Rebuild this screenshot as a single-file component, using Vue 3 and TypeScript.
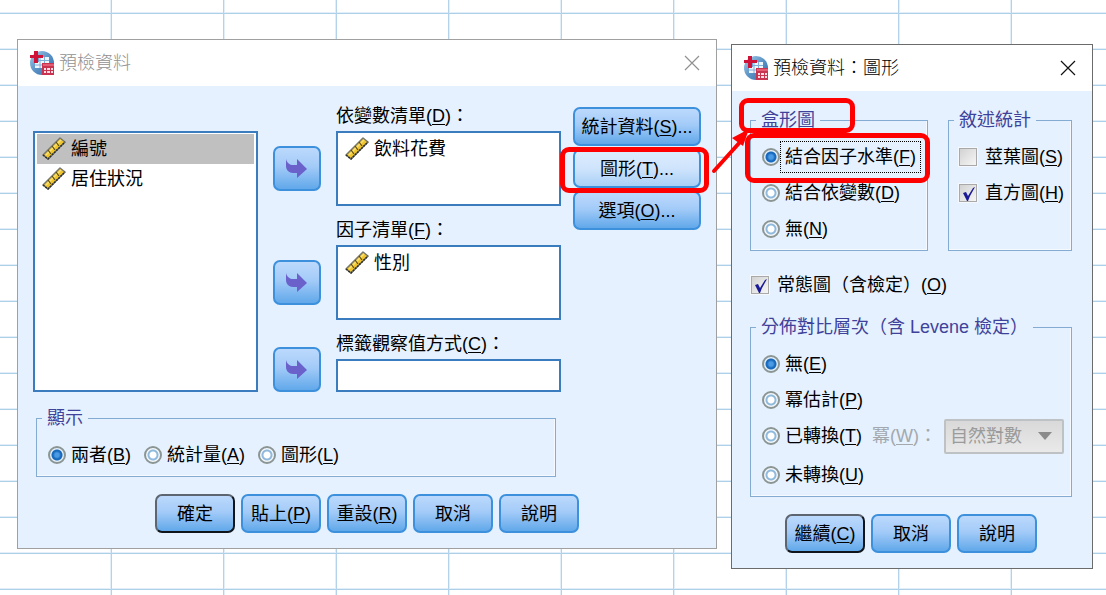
<script setup lang="ts">
import { ref } from 'vue'

interface Choice {
  value: string
  text: string
  key: string
}

const variables = ref<string[]>(['編號', '居住狀況'])
const selected = ref('編號')

const targets = [
  { id: 'dependent', text: '依變數清單', key: 'D', items: ['飲料花費'] },
  { id: 'factor', text: '因子清單', key: 'F', items: ['性別'] },
]

const display = ref('both')
const displayChoices: Choice[] = [
  { value: 'both', text: '兩者', key: 'B' },
  { value: 'stats', text: '統計量', key: 'A' },
  { value: 'plots', text: '圖形', key: 'L' },
]

const sideButtons = [
  { text: '統計資料', key: 'S', marked: false },
  { text: '圖形', key: 'T', marked: true },
  { text: '選項', key: 'O', marked: false },
]

const mainActions = [
  { text: '確定', key: '' },
  { text: '貼上', key: 'P' },
  { text: '重設', key: 'R' },
  { text: '取消', key: '' },
  { text: '說明', key: '' },
]
const plotActions = [
  { text: '繼續', key: 'C' },
  { text: '取消', key: '' },
  { text: '說明', key: '' },
]

const boxplot = ref('factor')
const boxplotChoices: Choice[] = [
  { value: 'factor', text: '結合因子水準', key: 'F' },
  { value: 'dependent', text: '結合依變數', key: 'D' },
  { value: 'none', text: '無', key: 'N' },
]

const descriptive = ref([
  { text: '莖葉圖', key: 'S', on: false },
  { text: '直方圖', key: 'H', on: true },
])
const normality = ref(true)

const spread = ref('none')
const spreadChoices: Choice[] = [
  { value: 'none', text: '無', key: 'E' },
  { value: 'power', text: '冪估計', key: 'P' },
  { value: 'transformed', text: '已轉換', key: 'T' },
  { value: 'untransformed', text: '未轉換', key: 'U' },
]
</script>

<template>
  <svg class="defs" width="0" height="0" aria-hidden="true">
    <defs>
      <linearGradient id="globe" x1="0" y1="0" x2="1" y2="1">
        <stop offset="0" stop-color="#a9cdea" />
        <stop offset="0.5" stop-color="#5b93c6" />
        <stop offset="1" stop-color="#2f6aa5" />
      </linearGradient>
      <symbol id="app-logo" viewBox="0 0 24 24">
        <circle cx="12" cy="12" r="12" fill="url(#globe)" />
        <path d="M9 6h10v11H5v-6h4z" fill="#eef5fb" />
        <path d="M5 14h14M9 9.500h10M10 6v11M14.500 6v11" stroke="#7fb0dc" stroke-width="1" />
        <path d="M4 0h4v4h5v3H8v5H4V7H0V4h4z" fill="#cf1237" />
        <rect x="12" y="12" width="12" height="12" fill="#c93350" />
        <rect x="13" y="13" width="11" height="2" fill="#e45c72" />
        <path d="M14 17h2v2h-2zM17 17h3v2h-3zM21 17h2v2h-2zM14 20h2v2h-2zM17 20h3v2h-3zM21 20h2v2h-2z" fill="#fbdfe4" />
      </symbol>
      <symbol id="ruler" viewBox="0 0 24 24">
        <path d="M1 18L18 1l5 4L6 22z" fill="#f0c52c" stroke="#77776a" stroke-width="1.500" stroke-linejoin="round" />
        <path d="M4 18L19 3" stroke="#f9e277" stroke-width="1.500" />
        <path d="M6 13l3 4M10 9l3 4M14 5l3 4" stroke="#5b4a12" stroke-width="1.200" />
        <path d="M1 18l5 4L23 5" fill="none" stroke="#2c2d30" stroke-width="1.500" stroke-dasharray="2 1" />
      </symbol>
      <symbol id="move-arrow" viewBox="0 0 22 20">
        <path d="M0 0C1 4 4 6 7 6h4V0l10 10-10 9v-5H7C3 14 0 11 0 7z" fill="#6a61cb" />
      </symbol>
      <symbol id="close" viewBox="0 0 16 16">
        <path d="M1 1l14 14M15 1L1 15" fill="none" stroke="currentColor" stroke-width="1.200" />
      </symbol>
      <symbol id="check" viewBox="0 0 20 20">
        <path d="M5 10l3-1 2 4L15 5l2-1-5 9-2 5H9z" fill="#1a1a96" />
      </symbol>
    </defs>
  </svg>

  <main class="desktop">
    <section class="window idle" aria-labelledby="main-title">
      <header class="titlebar">
        <svg class="logo" aria-hidden="true"><use href="#app-logo" /></svg>
        <h1 id="main-title">預檢資料</h1>
        <button class="close" type="button" aria-label="關閉"><svg><use href="#close" /></svg></button>
      </header>
      <div class="body main-body">
        <div class="columns">
          <div class="left">
            <div class="transfer">
              <ul class="list source" role="listbox" aria-label="變數">
                <li
                  v-for="name in variables"
                  :key="name"
                  role="option"
                  :aria-selected="selected === name"
                  :class="{ selected: selected === name }"
                  @click="selected = name"
                >
                  <svg class="ruler" aria-hidden="true"><use href="#ruler" /></svg>{{ name }}
                </li>
              </ul>
              <template v-for="t in targets" :key="t.id">
                <div :id="t.id" class="caption">{{ t.text }}(<u>{{ t.key }}</u>)：</div>
                <button class="push move" type="button" :aria-label="'移至' + t.text">
                  <svg><use href="#move-arrow" /></svg>
                </button>
                <ul class="list" role="listbox" :aria-labelledby="t.id">
                  <li v-for="item in t.items" :key="item" role="option">
                    <svg class="ruler" aria-hidden="true"><use href="#ruler" /></svg>{{ item }}
                  </li>
                </ul>
              </template>
              <label class="caption" for="case-label">標籤觀察值方式(<u>C</u>)：</label>
              <button class="push move last" type="button" aria-label="移至標籤觀察值方式">
                <svg><use href="#move-arrow" /></svg>
              </button>
              <input id="case-label" class="list single" type="text" />
            </div>
            <fieldset class="group display">
              <legend>顯示</legend>
              <div class="inline-row">
                <label v-for="c in displayChoices" :key="c.value" class="option">
                  <input v-model="display" type="radio" name="display" :value="c.value" />
                  <span class="text">{{ c.text }}(<u>{{ c.key }}</u>)</span>
                </label>
              </div>
            </fieldset>
          </div>
          <div class="side">
            <button v-for="b in sideButtons" :key="b.key" class="push" :class="{ hot: b.marked }" type="button">
              {{ b.text }}(<u>{{ b.key }}</u>)...
              <span v-if="b.marked" class="mark mark-button"></span>
            </button>
          </div>
        </div>
        <div class="actions">
          <button v-for="(a, i) in mainActions" :key="a.text" class="push" :class="{ primary: i === 0 }" type="button">
            {{ a.text }}<template v-if="a.key">(<u>{{ a.key }}</u>)</template>
          </button>
        </div>
      </div>
    </section>

    <section class="window front" aria-labelledby="plot-title">
      <header class="titlebar">
        <svg class="logo" aria-hidden="true"><use href="#app-logo" /></svg>
        <h1 id="plot-title">預檢資料：圖形</h1>
        <button class="close" type="button" aria-label="關閉"><svg><use href="#close" /></svg></button>
      </header>
      <div class="body plot-body">
        <div class="pair">
          <fieldset class="group">
            <legend>盒形圖<span class="mark mark-legend"></span></legend>
            <label v-for="(c, i) in boxplotChoices" :key="c.value" class="option">
              <input v-model="boxplot" type="radio" name="boxplot" :value="c.value" />
              <span class="text" :class="{ focused: i === 0 }">{{ c.text }}(<u>{{ c.key }}</u>)</span>
              <span v-if="i === 0" class="mark mark-option"></span>
            </label>
          </fieldset>
          <fieldset class="group checks">
            <legend>敘述統計</legend>
            <label v-for="d in descriptive" :key="d.key" class="option">
              <span class="tick">
                <input v-model="d.on" type="checkbox" />
                <svg v-if="d.on"><use href="#check" /></svg>
              </span>
              <span class="text">{{ d.text }}(<u>{{ d.key }}</u>)</span>
            </label>
          </fieldset>
        </div>
        <label class="option normality">
          <span class="tick">
            <input v-model="normality" type="checkbox" />
            <svg v-if="normality"><use href="#check" /></svg>
          </span>
          <span class="text">常態圖（含檢定）(<u>O</u>)</span>
        </label>
        <fieldset class="group spread">
          <legend>分佈對比層次（含 Levene 檢定）</legend>
          <div v-for="c in spreadChoices" :key="c.value" class="spread-row">
            <label class="option">
              <input v-model="spread" type="radio" name="spread" :value="c.value" />
              <span class="text">{{ c.text }}(<u>{{ c.key }}</u>)</span>
            </label>
            <template v-if="c.value === 'transformed'">
              <label class="muted" for="power">冪(<u>W</u>)：</label>
              <span class="combo">
                <select id="power" disabled><option>自然對數</option></select>
                <svg viewBox="0 0 14 8" aria-hidden="true"><path d="M0 0h14L7 8z" /></svg>
              </span>
            </template>
          </div>
        </fieldset>
        <div class="actions">
          <button v-for="(a, i) in plotActions" :key="a.text" class="push" :class="{ primary: i === 0 }" type="button">
            {{ a.text }}<template v-if="a.key">(<u>{{ a.key }}</u>)</template>
          </button>
        </div>
      </div>
      <svg class="pointer" viewBox="0 0 44 52" aria-hidden="true">
        <path d="M7 47L34 17" stroke="#f00" stroke-width="4" stroke-linecap="round" />
        <path d="M25 14L42 5L36 22z" fill="#f00" />
      </svg>
    </section>
  </main>
</template>

<style>
body {
  margin: 0;
}
</style>

<style scoped>
.defs {
  position: absolute;
}
.desktop,
.desktop * {
  box-sizing: border-box;
}
.desktop {
  display: grid;
  grid-template-columns: minmax(0, 700fr) minmax(0, 362fr);
  align-items: start;
  gap: 14px;
  min-height: 100vh;
  padding: 39px 13px 26px 17px;
  overflow: hidden;
  font: 18px/18px "Liberation Sans", "Noto Sans CJK TC", sans-serif;
  color: #000;
  background-color: #fff;
  background-image:
    linear-gradient(to right, transparent 111px, #b4d3ea 111px 112px, transparent 112px 223px, #b4d3ea 223px 224px, transparent 224px),
    linear-gradient(to bottom, transparent 12px, #e2eff9 12px 13px, #aecfe8 13px 14px, transparent 14px),
    linear-gradient(to right, transparent 110px, #e2eff9 110px 111px, transparent 111px 224px, #e2eff9 224px);
  background-size: 225px 100%, 100% 36px, 225px 100%;
}
.window {
  position: relative;
  background: #e5f1fe;
  border: 1px solid #a0a0a0;
}
.front {
  margin-top: 5px;
  border-color: #6b6b6b;
}
.titlebar {
  display: flex;
  align-items: center;
  height: 46px;
  padding: 0 16px 0 12px;
  background: #fff;
}
.logo {
  width: 24px;
  height: 24px;
}
h1 {
  flex: 1;
  margin: 0 0 0 5px;
  font-size: 18px;
  line-height: 24px;
  font-weight: 300;
}
.idle h1,
.idle .close {
  color: #919191;
}
.close {
  display: flex;
  padding: 0;
  border: 0;
  background: none;
  color: #111;
}
.close svg {
  width: 16px;
  height: 16px;
}
u {
  text-underline-offset: 2px;
}
.main-body {
  padding: 21px 15px 15px;
}
.plot-body {
  padding: 20px 20px 15px 18px;
}
.columns {
  display: flex;
  gap: 12px;
}
.left {
  flex: 1;
  min-width: 0;
}
.transfer {
  display: grid;
  grid-template-columns: minmax(0, 1fr) 48px minmax(0, 1fr);
  column-gap: 15px;
}
.caption {
  grid-column: 3;
  height: 24px;
  line-height: 18px;
  white-space: nowrap;
}
.list ~ .list + .caption {
  height: 39px;
  padding-top: 15px;
}
.list {
  grid-column: 3;
  min-height: 75px;
  margin: 0;
  padding: 1px 2px;
  border: 2px solid #3a7cbd;
  background: #fff;
  list-style: none;
}
.source {
  grid-column: 1;
  grid-row: 2 / 7;
}
.single {
  width: 100%;
  min-height: 33px;
  font: inherit;
}
.list li {
  display: flex;
  align-items: center;
  gap: 5px;
  height: 30px;
  padding-left: 5px;
}
.list .selected {
  background: #c0c0c0;
}
.ruler {
  width: 24px;
  height: 24px;
}
.push {
  position: relative;
  height: 39px;
  padding: 0;
  border: 2px solid #3c90dc;
  border-radius: 7px;
  background: linear-gradient(#bcd9fc, #a3cbf8 45%, #61a8ea);
  color: #000;
  font: inherit;
  line-height: 24px;
  white-space: nowrap;
}
.hot {
  background: linear-gradient(#dcecfd, #cfe4fc 50%, #a9d0f6);
}
.primary {
  border-color: #5d6670 #10151c #10151c #5d6670;
}
.move {
  grid-column: 2;
  align-self: center;
  display: flex;
  align-items: center;
  justify-content: center;
  height: 45px;
}
.move svg {
  width: 22px;
  height: 20px;
}
.last {
  grid-row: 5 / 7;
  align-self: end;
}
.side {
  display: flex;
  flex-direction: column;
  gap: 3px;
  width: 128px;
}
.group {
  min-width: 0;
  margin: 0;
  padding: 0 4px 3px 11px;
  border: 1px solid #84acd3;
  box-shadow: inset -1px -1px 0 #f6faff;
}
.group legend {
  position: relative;
  margin-left: -6px;
  margin-bottom: 10px;
  padding: 0 5px;
  color: #3f429b;
  white-space: nowrap;
}
.display {
  margin: 17px 5px 0 3px;
}
.inline-row {
  display: flex;
  gap: 8px;
}
.option {
  position: relative;
  display: flex;
  align-items: center;
  height: 36px;
  white-space: nowrap;
}
.option input[type='radio'] {
  appearance: none;
  flex: none;
  width: 18px;
  height: 18px;
  margin: 0;
  border: 2px solid #8b9694;
  border-radius: 50%;
  background: radial-gradient(circle, #fff 0 3px, #8fb9dd 4px 5px, #f4f8fc 6px);
}
.option input[type='radio']:checked {
  background: radial-gradient(circle, #4b9be4 0 2px, #1769bd 4px 5px, #e4effa 6px);
}
.text {
  padding: 6px 4px;
  border: 1px solid transparent;
}
.focused {
  border: 1px dotted #000;
}
.pair {
  display: grid;
  grid-template-columns: minmax(0, 178fr) minmax(0, 124fr);
  gap: 20px;
}
.checks {
  padding-left: 9px;
}
.checks legend {
  margin-left: -4px;
}
.tick {
  display: grid;
  flex: none;
  width: 20px;
  height: 20px;
  margin-right: 2px;
}
.tick > * {
  grid-area: 1 / 1;
  width: 20px;
  height: 20px;
}
.tick input {
  appearance: none;
  margin: 0;
  border: 2px solid #a9a9a9;
  outline: 1px solid #f5f8fc;
  outline-offset: -1px;
  background: linear-gradient(135deg, #d2d2d2, #f6f6f6);
}
.tick svg {
  pointer-events: none;
}
.normality {
  height: 20px;
  margin-top: 24px;
}
.spread {
  margin-top: 23px;
}
.spread-row {
  display: flex;
  align-items: center;
}
.spread-row:last-child {
  margin-top: 3px;
}
.muted {
  margin-left: 5px;
  color: #a3a8ad;
  white-space: nowrap;
}
.combo {
  display: grid;
  align-items: center;
  width: 120px;
  margin: 0 3px 0 auto;
}
.combo > * {
  grid-area: 1 / 1;
}
.combo select {
  appearance: none;
  width: 100%;
  height: 35px;
  padding: 0 4px;
  border: 2px solid #bfc2c4;
  border-radius: 2px;
  background: linear-gradient(#d9d9d9, #e9e9e9);
  color: #9b9b9b;
  font: inherit;
  opacity: 1;
}
.combo svg {
  justify-self: end;
  width: 14px;
  height: 8px;
  margin-right: 12px;
  fill: #8b8b8b;
}
.actions {
  display: flex;
  justify-content: center;
  gap: 6px;
  margin-top: 17px;
}
.actions .push {
  width: 80px;
}
.mark {
  position: absolute;
  z-index: 2;
  border: 5px solid #f00;
  border-radius: 9px;
  pointer-events: none;
}
.mark-button {
  inset: -4px -10px -7px -15px;
}
.mark-legend {
  inset: -13px -35px -4px -17px;
}
.mark-option {
  inset: -6px -7px -8px -17px;
}
.pointer {
  position: absolute;
  z-index: 2;
  left: -25px;
  top: 79px;
  width: 44px;
  height: 52px;
}
</style>
